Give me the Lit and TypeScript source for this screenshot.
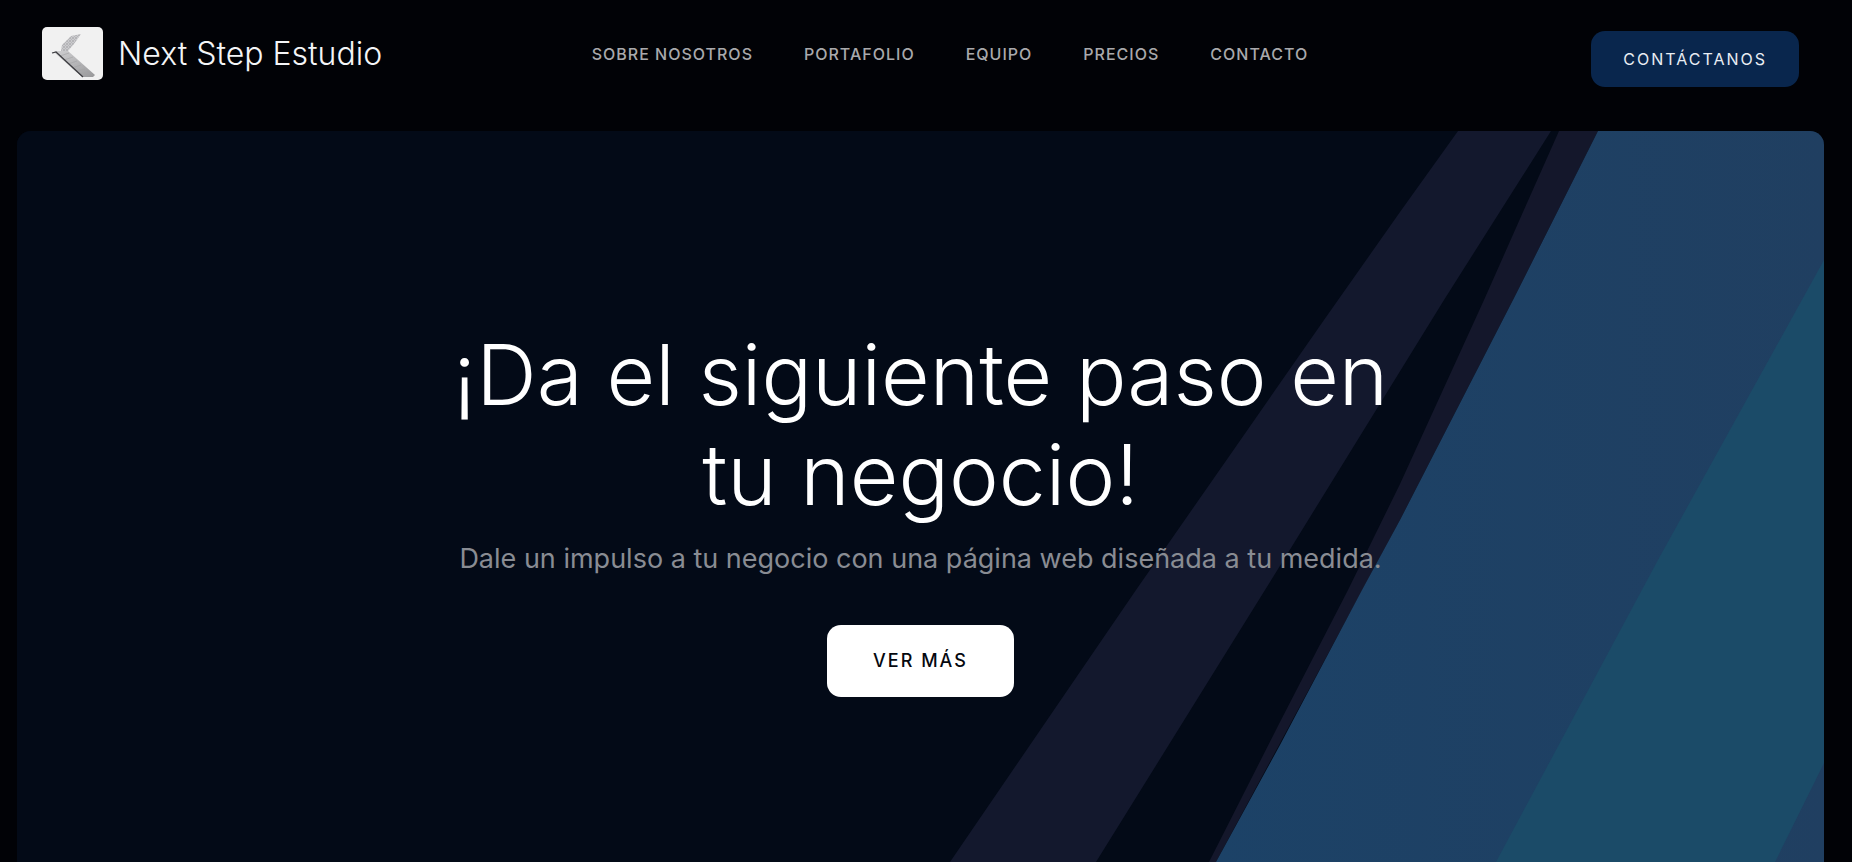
import { LitElement, html, css } from "lit";
import { customElement } from "lit/decorators.js";

const LINKS = [
  { label: "Sobre nosotros", href: "#nosotros" },
  { label: "Portafolio", href: "#portafolio" },
  { label: "Equipo", href: "#equipo" },
  { label: "Precios", href: "#precios" },
  { label: "Contacto", href: "#contacto" },
];

@customElement("site-header")
export class SiteHeader extends LitElement {
  static styles = css`
    :host {
      display: block;
    }
    .bar {
      display: grid;
      grid-template-columns: 28fr auto 25fr;
      align-items: start;
      padding: 27px 25px 44px;
    }
    .brand {
      display: flex;
      align-items: center;
      gap: 15px;
      color: #f4f5f7;
      font-size: 32px;
      font-weight: 300;
      line-height: 36px;
      text-decoration: none;
      white-space: nowrap;
    }
    .logo {
      display: block;
      width: 61px;
      height: 53px;
      border-radius: 5px;
    }
    .links {
      display: flex;
      gap: 51px;
      height: 54px;
      align-items: center;
    }
    .link {
      color: #a9a9ac;
      font-size: 16px;
      font-weight: 500;
      line-height: 20px;
      letter-spacing: 1px;
      text-transform: uppercase;
      text-decoration: none;
      white-space: nowrap;
    }
    .contact {
      justify-self: end;
      margin-top: 4px;
      padding: 18px 32px;
      border: 0;
      border-radius: 14px;
      background: #09264d;
      color: #e9edf3;
      font: inherit;
      font-size: 16px;
      line-height: 20px;
      letter-spacing: 2px;
      text-transform: uppercase;
    }
  `;

  render() {
    return html`
      <header class="bar">
        <a class="brand" href="#inicio">
          <svg class="logo" viewBox="0 0 61 53" aria-hidden="true">
            <defs>
              <pattern id="mesh" width="3" height="3" patternUnits="userSpaceOnUse">
                <rect width="3" height="3" fill="#cbcbce" />
                <path d="M0 3L3 0M0 1L2 3" stroke="#a6a6aa" stroke-width=".6" />
              </pattern>
              <linearGradient id="steps" x1="0" y1="0" x2="1" y2="1">
                <stop offset="0" stop-color="#d0d0d2" />
                <stop offset=".5" stop-color="#b6b6b8" />
                <stop offset="1" stop-color="#98989a" />
              </linearGradient>
            </defs>
            <rect width="61" height="53" fill="#f1f1f1" />
            <path d="M39 7L29 9L20 18L19 24L26 24L32 17Z" fill="url(#mesh)" />
            <path d="M10 27L14 24L26 24L53 48L51 50L40 50L13 26Z" fill="url(#steps)" />
            <path d="M18 29L27 26M22 33L31 30M26 37L35 34M30 41L39 38M34 44L43 42M37 47L47 45" stroke="#a2a2a5" stroke-width=".6" />
            <path d="M10 26L14 25L41 50" fill="none" stroke="#3c3c40" stroke-width="1.2" />
          </svg>
          <span>Next Step Estudio</span>
        </a>
        <nav class="links" aria-label="Principal">
          ${LINKS.map((l) => html`<a class="link" href=${l.href}>${l.label}</a>`)}
        </nav>
        <button class="contact" type="button">Contáctanos</button>
      </header>
    `;
  }
}

@customElement("hero-section")
export class HeroSection extends LitElement {
  static styles = css`
    :host {
      display: grid;
      overflow: hidden;
      border-radius: 14px 14px 0 0;
      background: #030a17;
    }
    .art,
    .content {
      grid-area: 1 / 1;
    }
    .art {
      display: block;
      width: 100%;
      height: 100%;
      min-height: 0;
      contain: size;
    }
    .content {
      z-index: 1;
      display: flex;
      flex-direction: column;
      align-items: center;
      justify-content: center;
      padding: 28px 24px 0;
      text-align: center;
    }
    .title {
      max-width: 980px;
      margin: 0;
      color: #fff;
      font-size: 84px;
      font-weight: 300;
      line-height: 100px;
    }
    .lead {
      margin: 16px 0 48px;
      color: #898c93;
      font-size: 27px;
      line-height: 36px;
    }
    .more {
      padding: 24px 46px;
      border: 0;
      border-radius: 14px;
      background: #fff;
      color: #05080f;
      font: inherit;
      font-size: 18px;
      font-weight: 500;
      line-height: 24px;
      letter-spacing: 2px;
      text-transform: uppercase;
    }
  `;

  render() {
    return html`
      <svg class="art" viewBox="0 0 1807 731" preserveAspectRatio="xMaxYMin slice" aria-hidden="true">
        <defs>
          <linearGradient id="blue" x1="0" y1="0" x2="1" y2="0">
            <stop offset="0" stop-color="#1c4267" />
            <stop offset="1" stop-color="#203f61" />
          </linearGradient>
        </defs>
        <rect width="1807" height="731" fill="#030a17" />
        <path d="M1441 0H1534L1427 169L1248 459L1079 731H933L1119 459L1307 189L1383 81Z" fill="#13182d" />
        <path d="M1542 0H1581L1496 169L1383 389L1199 731H1192L1263 591L1331 459L1383 353L1467 169Z" fill="#14172b" />
        <path d="M1581 0H1807V731H1199L1263 614L1345 459L1383 389L1496 169Z" fill="url(#blue)" />
        <path d="M1807 129V632L1758 731H1479L1641 429Z" fill="#1b4b68" />
      </svg>
      <div class="content">
        <h1 class="title">¡Da el siguiente paso en tu negocio!</h1>
        <p class="lead">Dale un impulso a tu negocio con una página web diseñada a tu medida.</p>
        <button class="more" type="button">Ver más</button>
      </div>
    `;
  }
}

@customElement("app-root")
export class AppRoot extends LitElement {
  static styles = css`
    :host {
      display: flex;
      flex-direction: column;
      box-sizing: border-box;
      min-height: 100vh;
      padding: 0 28px 0 17px;
      background: #010206;
      font-family: Inter, "Open Sans", sans-serif;
    }
    .hero {
      flex: 1;
    }
  `;

  render() {
    return html`
      <site-header></site-header>
      <hero-section class="hero"></hero-section>
    `;
  }
}
